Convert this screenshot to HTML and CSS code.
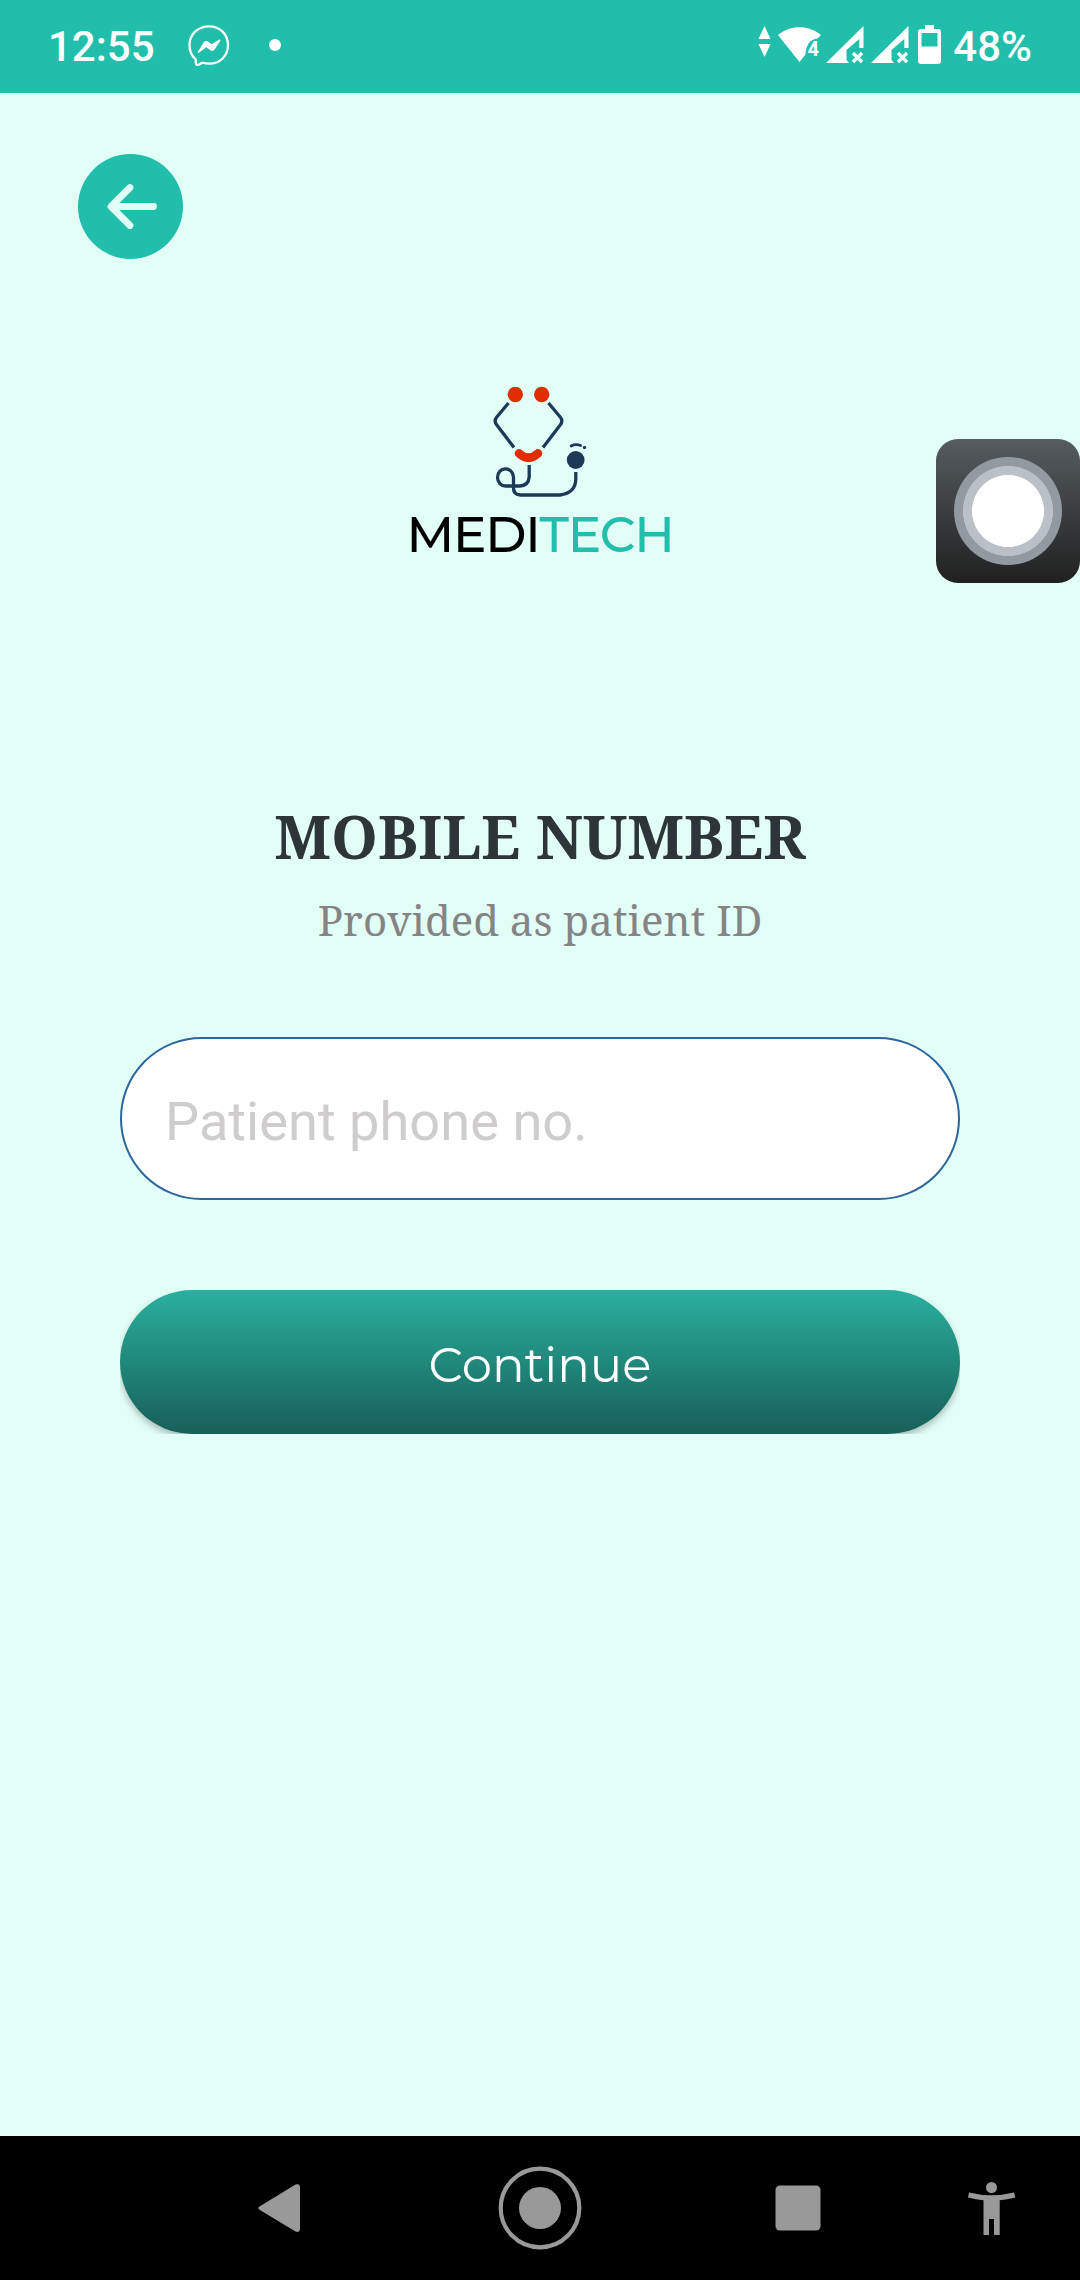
FILE: index.html
```html
<!DOCTYPE html>
<html lang="en">
<head>
<meta charset="utf-8">
<title>Meditech</title>
<link rel="stylesheet" href="styles.css">
</head>
<body>
<div class="screen">
  <header class="status">
    <span class="clock">12:55</span>
    <svg class="messenger" width="42" height="42" viewBox="0 0 42 42">
      <path d="M21 1.300C32 1.300 40 9.300 40 20.100S32 38.700 21 38.700C18.500 38.700 16.500 38.300 14.500 37.700L10.500 39.600C9 40.300 8 39.600 7.900 38.200L7.700 34.300C3.600 31 1.500 26 1.500 20.100 1.500 9.300 10 1.300 21 1.300Z" fill="none" stroke="#fff" stroke-width="2.300"/>
      <path d="M10 26.500L15.800 17.300C16.700 15.900 18.500 15.500 19.900 16.500L23.600 19.300 31 14.700C32 14.100 32.800 15 32.200 16L26.600 24.400C25.600 25.900 23.800 26.200 22.400 25.200L18.400 22.200 11.200 27.600C10.200 28.200 9.400 27.500 10 26.500Z" fill="#fff"/>
    </svg>
    <span class="dot"></span>
    <svg class="signals" width="184" height="40" viewBox="757 25 184 40" fill="#fff">
      <path d="M758.500 39L764.500 26 770.500 39ZM758.500 44H770.500L764.500 57Z"/>
      <path d="M778 35C790 24.500 809 24.500 821 35L817.500 38.500C810 39 806 45 805.500 54.500L799.500 62Z"/>
      <text class="net" x="807.500" y="56">4</text>
      <path fill-rule="evenodd" d="M826 63L863.500 26V48H859.300V39L846.500 50V60L849 63ZM871 63L908.500 26V48H904.300V39L891.500 50V60L894 63Z"/>
      <path d="M853 53L862 62M862 53L853 62M898 53L907 62M907 53L898 62" fill="none" stroke="#fff" stroke-width="3.300"/>
      <path fill-rule="evenodd" d="M925 25H934V29H938Q941 29 941 32V61Q941 64 938 64H921Q918 64 918 61V32Q918 29 921 29H925ZM921.500 33V46.500H937.500V33Z"/>
    </svg>
    <span class="battery">48%</span>
  </header>

  <main class="content">
    <button class="back" aria-label="Back">
      <svg width="105" height="105" viewBox="0 0 105 105">
        <path d="M52 33.500L33 52.500 52 71.500M34 52.500H75.500" fill="none" stroke="#e2fff7" stroke-width="6.800" stroke-linecap="round" stroke-linejoin="round"/>
      </svg>
    </button>

    <svg class="logo" width="290" height="200" viewBox="395 370 290 200">
      <g fill="#df2d00">
        <circle cx="515.300" cy="394.500" r="7.700"/>
        <circle cx="541.700" cy="394.500" r="7.700"/>
      </g>
      <g fill="none" stroke="#1c3a57" stroke-width="3.300">
        <path d="M508.500 403L496.800 417Q493.500 421 496.800 425L514 447.500"/>
        <path d="M548.500 403L560.200 417Q563.500 421 560.200 425L543 447.500"/>
        <path d="M529.200 465V477Q528.500 485.500 520 486H505.500A8 8.600 0 1 1 513.500 477V488Q513.500 495 520.500 495H560Q575.500 493 575.800 479V472"/>
        <path d="M571 446Q575.500 443.700 580.700 445.500" stroke-linecap="round" stroke-width="2.700"/>
      </g>
      <path d="M519 453.300Q528.500 462 538 453.300" fill="none" stroke="#df2d00" stroke-width="8.600" stroke-linecap="round"/>
      <circle cx="575.700" cy="460" r="8.900" fill="#1c3a57"/>
      <circle cx="584.500" cy="447.500" r="1.700" fill="#1c3a57"/>
      <text class="brand" x="406.500" y="552">MEDI<tspan class="tech">TECH</tspan></text>
    </svg>

    <h1 class="title">MOBILE NUMBER</h1>
    <p class="subtitle">Provided as patient ID</p>

    <input class="phone" type="tel" placeholder="Patient phone no.">
    <div class="action"><button class="continue">Continue</button></div>
  </main>

  <nav class="navbar">
    <svg width="1080" height="144" viewBox="0 0 1080 144" fill="#999">
      <path d="M259.500 70.500Q257 72 259.500 73.700L295.500 95.500Q300 97 300 92.500V51.500Q300 47 295.500 48.500Z"/>
      <circle cx="540" cy="72" r="21"/>
      <circle cx="540" cy="72" r="39.300" fill="none" stroke="#999" stroke-width="4.200"/>
      <rect x="775.500" y="49.500" width="45" height="45" rx="4.500"/>
      <circle cx="991.500" cy="51.500" r="5.500"/>
      <path d="M969 56.500Q991.500 62 1014 56.500L1015.300 61.600Q1007 63.700 999.700 64.300V99H994V83H989V99H983.500V64.300Q976 63.700 968 61.600Z"/>
    </svg>
  </nav>

  <div class="assist"><span class="knob"></span></div>
</div>
</body>
</html>
```
FILE: styles.css
```css
* { box-sizing: border-box; }
body { margin: 0; background: #e2fff7; }
.screen {
  position: relative;
  display: flex;
  flex-direction: column;
  width: 1080px;
  height: 2280px;
  overflow: hidden;
  font-family: Roboto, sans-serif;
}
.status {
  display: flex;
  align-items: center;
  height: 93px;
  padding: 0 48px 3px 48px;
  background: #21bfab;
  color: #fff;
  font-size: 42px;
  font-weight: 500;
}
.clock { width: 140px; padding-top: 3px; }
.messenger { margin-top: 2px; }
.dot {
  width: 12px;
  height: 12px;
  margin-left: 39px;
  border-radius: 50%;
  background: #fff;
}
.signals { margin-left: auto; }
.net { font-size: 20px; font-weight: 700; }
.battery { margin-left: 12px; padding-top: 3px; }

.content {
  display: flex;
  flex: 1;
  flex-direction: column;
  align-items: center;
  padding: 61px 120px 0;
}
.back {
  align-self: flex-start;
  width: 105px;
  height: 105px;
  margin-left: -42px;
  padding: 0;
  border: 0;
  border-radius: 50%;
  background: #21bfab;
}
.back svg { display: block; }
.logo { margin-top: 111px; }
.brand {
  font-family: Montserrat, Inter, sans-serif;
  font-size: 50px;
  font-weight: 500;
  letter-spacing: -1.250px;
}
.tech { fill: #21bfab; }
.title {
  margin: 226px 0 0;
  color: #2d3538;
  font: 700 59.700px/80px "Noto Serif", "DejaVu Serif", serif;
  white-space: nowrap;
}
.subtitle {
  margin: 16px 0 0;
  color: #848484;
  font: 400 42px/56px "Noto Serif", "DejaVu Serif", serif;
  white-space: nowrap;
}
.phone {
  width: 840px;
  height: 163px;
  margin-top: 89px;
  padding: 6px 43px 0;
  border: 2px solid #2c669d;
  border-radius: 82px;
  background: #fff;
  font: 400 54.200px Roboto, sans-serif;
}
.phone::placeholder { color: #cecccd; opacity: 1; }
.action {
  width: 840px;
  height: 144px;
  margin-top: 90px;
  overflow: hidden;
}
.continue {
  display: block;
  width: 100%;
  height: 144px;
  padding: 4px 0 0;
  border: 0;
  border-radius: 72px;
  background: linear-gradient(#29b09f, #185f58);
  box-shadow: 0 4px 7px rgba(0, 0, 0, .25);
  color: #fff;
  font: 400 48.300px Montserrat, Inter, sans-serif;
}
.navbar { height: 144px; background: #000; }
.navbar svg { display: block; }
.assist {
  position: absolute;
  top: 439px;
  right: 0;
  display: grid;
  place-items: center;
  width: 144px;
  height: 144px;
  border-radius: 22px;
  background: linear-gradient(#565c60, #202020);
}
.knob {
  width: 108px;
  height: 108px;
  border-radius: 50%;
  background: radial-gradient(circle closest-side, #fff 35.700px, #bac0c5 36.300px 44.700px, #9299a0 45.300px);
}
```
